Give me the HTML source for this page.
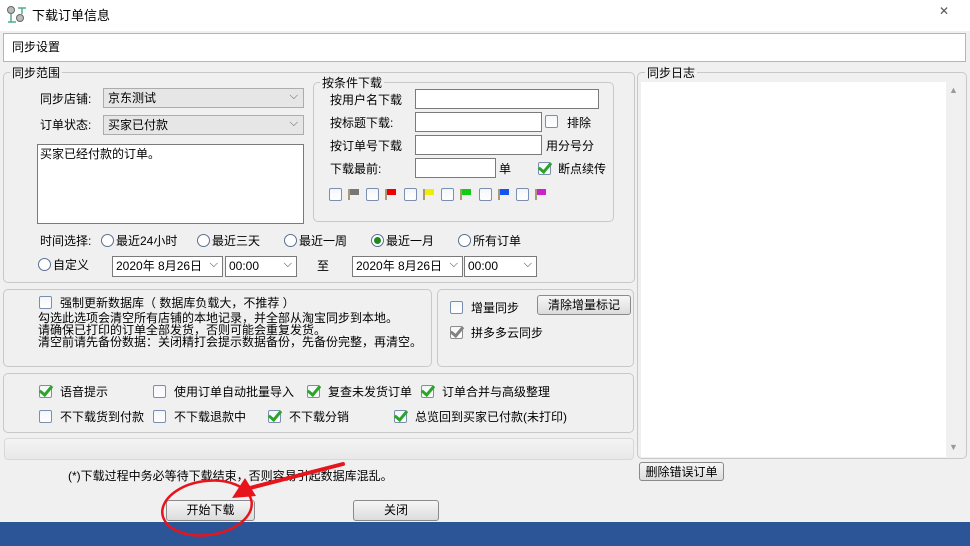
<!DOCTYPE html>
<html><head><meta charset="utf-8"><style>
*{box-sizing:border-box;margin:0;padding:0}
body{width:970px;height:546px;background:#f0f0f0;font-family:"Liberation Sans","Noto Sans CJK SC",sans-serif;font-size:12px;color:#000;position:relative;overflow:hidden}
.a{position:absolute}
.t{position:absolute;white-space:nowrap;line-height:14px}
.grp{position:absolute;border:1px solid #c8c8c8;border-radius:5px}
.lg{position:absolute;background:#f0f0f0;padding:0 2px;line-height:14px}
.cb{position:absolute;width:13px;height:13px;border:1px solid #7a8fb0;border-radius:2px;background:linear-gradient(#f4f6fa,#fff)}
.ck::after{content:"";position:absolute;left:2px;top:-3px;width:5px;height:10px;border:solid #2aa52a;border-width:0 3px 3px 0;transform:rotate(40deg)}
.in{position:absolute;background:#fff;border:1px solid #7a7a7a}
.sel{position:absolute;background:#e6e6e6;border:1px solid #acacac;padding-left:4px;line-height:18px}
.sel::after{content:"⌵";position:absolute;right:5px;top:-2px;color:#555;font-size:11px}
.rd{position:absolute;width:13px;height:13px;border:1px solid #5a6f90;border-radius:50%;background:#fff}
.btn{position:absolute;border:1px solid #8a8a8a;border-radius:3px;background:linear-gradient(#f6f6f6,#dcdcdc);text-align:center;line-height:18px}
.dt{position:absolute;background:#fff;border:1px solid #7a7a7a;line-height:18px;padding-left:3px}
.dt::after{content:"⌵";position:absolute;right:4px;top:-2px;font-size:11px;color:#333}
</style></head><body>
<div class="a" style="left:0;top:0;width:970px;height:31px;background:#fff"></div>
<svg class="a" style="left:6px;top:6px" width="22" height="18"><circle cx="5" cy="4" r="3.5" fill="#bbb" stroke="#666"/><circle cx="14" cy="12" r="3.5" fill="#bbb" stroke="#666"/><path d="M5 8v8M2 16h8M12 2h8M16 2v6" stroke="#5a8" stroke-width="1.5" fill="none"/></svg>
<div class="t" style="left:32px;top:9px;font-size:13px">下载订单信息</div>
<div class="a" style="left:924px;top:2px;width:40px;height:18px;text-align:center;color:#555;line-height:18px">✕</div>
<div class="a" style="left:3px;top:33px;width:963px;height:29px;background:#fff;border:1px solid #a7b7d0"></div>
<div class="t" style="left:12px;top:40px">同步设置</div>

<div class="grp" style="left:3px;top:72px;width:632px;height:211px"></div>
<div class="lg" style="left:10px;top:66px">同步范围</div>
<div class="t" style="left:40px;top:92px">同步店铺:</div>
<div class="sel" style="left:103px;top:88px;width:201px;height:20px">京东测试</div>
<div class="t" style="left:40px;top:118px">订单状态:</div>
<div class="sel" style="left:103px;top:115px;width:201px;height:20px">买家已付款</div>
<div class="in" style="left:37px;top:144px;width:267px;height:80px;padding:2px"><span style="line-height:14px">买家已经付款的订单。</span></div>

<div class="grp" style="left:313px;top:82px;width:301px;height:140px"></div>
<div class="lg" style="left:320px;top:76px">按条件下载</div>
<div class="t" style="left:330px;top:93px">按用户名下载</div>
<div class="in" style="left:415px;top:89px;width:184px;height:20px"></div>
<div class="t" style="left:330px;top:116px">按标题下载:</div>
<div class="in" style="left:415px;top:112px;width:127px;height:20px"></div>
<div class="cb" style="left:545px;top:115px"></div>
<div class="t" style="left:567px;top:116px">排除</div>
<div class="t" style="left:330px;top:139px">按订单号下载</div>
<div class="in" style="left:415px;top:135px;width:127px;height:20px"></div>
<div class="t" style="left:546px;top:139px">用分号分</div>
<div class="t" style="left:330px;top:162px">下载最前:</div>
<div class="in" style="left:415px;top:158px;width:81px;height:20px"></div>
<div class="t" style="left:499px;top:162px">单</div>
<div class="cb ck" style="left:538px;top:162px"></div>
<div class="t" style="left:558px;top:162px">断点续传</div>
<div class="cb" style="left:329px;top:188px"></div><div class="a" style="left:348px;top:189px;width:2px;height:11px;background:#a97"></div><div class="a" style="left:350px;top:189px;width:9px;height:6px;background:#777"></div>
<div class="cb" style="left:366px;top:188px"></div><div class="a" style="left:385px;top:189px;width:2px;height:11px;background:#a97"></div><div class="a" style="left:387px;top:189px;width:9px;height:6px;background:#e00"></div>
<div class="cb" style="left:404px;top:188px"></div><div class="a" style="left:423px;top:189px;width:2px;height:11px;background:#a97"></div><div class="a" style="left:425px;top:189px;width:9px;height:6px;background:#ee0"></div>
<div class="cb" style="left:441px;top:188px"></div><div class="a" style="left:460px;top:189px;width:2px;height:11px;background:#a97"></div><div class="a" style="left:462px;top:189px;width:9px;height:6px;background:#1c1"></div>
<div class="cb" style="left:479px;top:188px"></div><div class="a" style="left:498px;top:189px;width:2px;height:11px;background:#a97"></div><div class="a" style="left:500px;top:189px;width:9px;height:6px;background:#15e"></div>
<div class="cb" style="left:516px;top:188px"></div><div class="a" style="left:535px;top:189px;width:2px;height:11px;background:#a97"></div><div class="a" style="left:537px;top:189px;width:9px;height:6px;background:#c2c"></div>

<div class="t" style="left:40px;top:234px">时间选择:</div>
<div class="rd" style="left:101px;top:234px"></div><div class="t" style="left:116px;top:234px">最近24小时</div>
<div class="rd" style="left:197px;top:234px"></div><div class="t" style="left:212px;top:234px">最近三天</div>
<div class="rd" style="left:284px;top:234px"></div><div class="t" style="left:299px;top:234px">最近一周</div>
<div class="rd" style="left:371px;top:234px"></div><div class="a" style="left:374px;top:237px;width:7px;height:7px;border-radius:50%;background:#1d8a1d"></div><div class="t" style="left:386px;top:234px">最近一月</div>
<div class="rd" style="left:458px;top:234px"></div><div class="t" style="left:473px;top:234px">所有订单</div>
<div class="rd" style="left:38px;top:258px"></div><div class="t" style="left:53px;top:258px">自定义</div>
<div class="dt" style="left:112px;top:256px;width:111px;height:21px">2020年 8月26日</div>
<div class="dt" style="left:225px;top:256px;width:72px;height:21px">00:00</div>
<div class="t" style="left:317px;top:259px">至</div>
<div class="dt" style="left:352px;top:256px;width:111px;height:21px">2020年 8月26日</div>
<div class="dt" style="left:464px;top:256px;width:73px;height:21px">00:00</div>

<div class="grp" style="left:3px;top:289px;width:429px;height:78px"></div>
<div class="cb" style="left:39px;top:296px"></div>
<div class="t" style="left:60px;top:296px">强制更新数据库（ 数据库负载大，不推荐 ）</div>
<div class="t" style="left:38px;top:312px;line-height:12px">勾选此选项会清空所有店铺的本地记录，并全部从淘宝同步到本地。<br>请确保已打印的订单全部发货，否则可能会重复发货。<br>清空前请先备份数据：关闭精打会提示数据备份，先备份完整，再清空。</div>

<div class="grp" style="left:437px;top:289px;width:197px;height:78px"></div>
<div class="cb" style="left:450px;top:301px"></div><div class="t" style="left:471px;top:301px">增量同步</div>
<div class="btn" style="left:537px;top:295px;width:94px;height:20px">清除增量标记</div>
<div class="cb ck" style="left:450px;top:326px;filter:grayscale(1)"></div><div class="t" style="left:471px;top:326px">拼多多云同步</div>

<div class="grp" style="left:3px;top:373px;width:631px;height:60px"></div>
<div class="cb ck" style="left:39px;top:385px"></div><div class="t" style="left:60px;top:385px">语音提示</div>
<div class="cb" style="left:153px;top:385px"></div><div class="t" style="left:174px;top:385px">使用订单自动批量导入</div>
<div class="cb ck" style="left:307px;top:385px"></div><div class="t" style="left:328px;top:385px">复查未发货订单</div>
<div class="cb ck" style="left:421px;top:385px"></div><div class="t" style="left:442px;top:385px">订单合并与高级整理</div>
<div class="cb" style="left:39px;top:410px"></div><div class="t" style="left:60px;top:410px">不下载货到付款</div>
<div class="cb" style="left:153px;top:410px"></div><div class="t" style="left:174px;top:410px">不下载退款中</div>
<div class="cb ck" style="left:268px;top:410px"></div><div class="t" style="left:289px;top:410px">不下载分销</div>
<div class="cb ck" style="left:394px;top:410px"></div><div class="t" style="left:415px;top:410px">总览回到买家已付款(未打印)</div>
<div class="a" style="left:4px;top:438px;width:630px;height:22px;border:1px solid #d8d8d8;border-radius:4px;background:linear-gradient(#f4f4f4,#e8e8e8)"></div>

<div class="grp" style="left:637px;top:72px;width:330px;height:387px"></div>
<div class="lg" style="left:645px;top:66px">同步日志</div>
<div class="a" style="left:641px;top:82px;width:322px;height:375px;background:#fff"></div>
<div class="a" style="left:946px;top:82px;width:17px;height:375px;background:#f0f0f0"></div>
<div class="a" style="left:949px;top:85px;font-size:9px;color:#999">▲</div>
<div class="a" style="left:949px;top:442px;font-size:9px;color:#999">▼</div>
<div class="btn" style="left:639px;top:462px;width:85px;height:19px">删除错误订单</div>

<div class="t" style="left:68px;top:469px">(*)下载过程中务必等待下载结束，否则容易引起数据库混乱。</div>
<div class="btn" style="left:166px;top:500px;width:89px;height:21px">开始下载</div>
<div class="btn" style="left:353px;top:500px;width:86px;height:21px">关闭</div>
<div class="a" style="left:0;top:522px;width:970px;height:24px;background:#2b5597"></div>
<svg class="a" style="left:0;top:0" width="970" height="546">
<ellipse cx="207" cy="508" rx="45" ry="27" fill="none" stroke="#e8141c" stroke-width="2.5" transform="rotate(-8 207 508)"/>
<path d="M343 464 L250 488" stroke="#e8141c" stroke-width="4" stroke-linecap="round"/>
<path d="M232 498 L245 478 L256 496 Z" fill="#e8141c"/>
</svg>
</body></html>
